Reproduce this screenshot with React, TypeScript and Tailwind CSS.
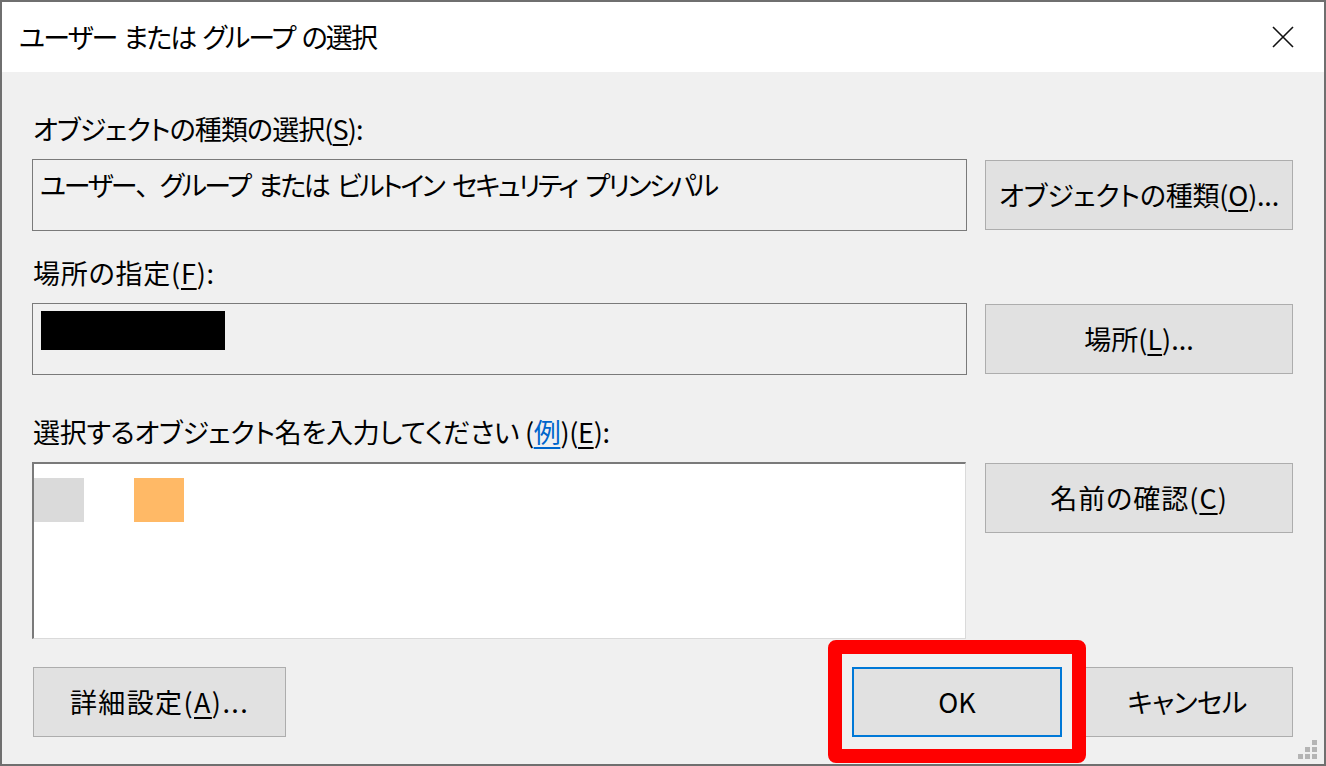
import React from 'react';

const font = "[font-family:'Noto_Sans_CJK_JP','Noto_Sans',sans-serif] [font-feature-settings:'palt']";

function Btn({
  children,
  className = '',
  focused = false,
}: {
  children: React.ReactNode;
  className?: string;
  focused?: boolean;
}) {
  const border = focused ? 'border-2 border-[#0078d7]' : 'border border-[#adadad]';
  return (
    <div
      className={`flex h-[70px] items-center justify-center bg-[#e1e1e1] ${border} text-[27px] leading-[36px] text-black ${className}`}
    >
      {children}
    </div>
  );
}

function Label({ children, className = '' }: { children: React.ReactNode; className?: string }) {
  return <div className={`h-[36px] pl-[1px] text-[27px] leading-[36px] text-black ${className}`}>{children}</div>;
}

export default function App() {
  return (
    <div className={`relative w-[1326px] h-[766px] border-2 border-[#6f6f6f] bg-[#f0f0f0] flex flex-col ${font}`}>
      {/* title bar */}
      <div className="h-[70px] bg-white flex items-center justify-between pl-[17px] pr-[30px]">
        <span className="text-[27px] leading-[36px] tracking-[-1.9px] [word-spacing:3px] text-black">
          ユーザー または グループ の選択
        </span>
        <svg width="22" height="22" viewBox="0 0 22 22">
          <path d="M1 1 L21 21 M21 1 L1 21" stroke="#111" strokeWidth="1.6" fill="none" />
        </svg>
      </div>

      <div className="flex flex-col pl-[30px] pr-[31px]">
        <Label className="mt-[39px] tracking-[-0.9px]">
          オブジェクトの種類の選択(<u className="underline-offset-4">S</u>):
        </Label>
        <div className="mt-[12px] flex items-start gap-[18px]">
          <div className="w-[935px] h-[72px] border border-[#7a7a7a] pl-[7px] pt-[7px] text-[27px] leading-[36px] tracking-[-2.45px] [word-spacing:5px] text-black">
            ユーザー<span className="[font-feature-settings:normal]">、</span>グループ または ビルトイン セキュリティ プリンシパル
          </div>
          <Btn className="w-[308px] mt-[1px] tracking-[-0.2px]">
            オブジェクトの種類(<u className="underline-offset-4">O</u>)...
          </Btn>
        </div>

        <Label className="mt-[24px] tracking-[0.8px]">
          場所の指定(<u className="underline-offset-4">F</u>):
        </Label>
        <div className="mt-[12px] flex items-start gap-[18px]">
          <div className="w-[935px] h-[72px] border border-[#7a7a7a] pl-[8px] pt-[7px]">
            <div className="w-[184px] h-[39px] bg-black" />
          </div>
          <Btn className="w-[308px] mt-[1px]">
            場所(<u className="underline-offset-4">L</u>)...
          </Btn>
        </div>

        <Label className="mt-[39px] tracking-[-0.3px]">
          選択するオブジェクト名を入力してください (<span className="text-[#0066cc] underline underline-offset-4">例</span>)(<u className="underline-offset-4">E</u>):
        </Label>
        <div className="mt-[12px] flex items-start gap-[19px]">
          <div className="w-[934px] h-[177px] bg-white border-t-2 border-l-2 border-r border-b border-t-[#7a7a7a] border-l-[#7a7a7a] border-r-[#dadada] border-b-[#dadada] pt-[14px] flex items-start gap-[50px]">
            <div className="w-[50px] h-[44px] bg-[#dadada]" />
            <div className="w-[50px] h-[44px] bg-[#ffb966]" />
          </div>
          <Btn className="w-[308px] mt-[1px] tracking-[1px]">
            名前の確認(<u className="underline-offset-4">C</u>)
          </Btn>
        </div>

        <div className="mt-[28px] flex items-start">
          <Btn className="w-[253px] ml-[1px] tracking-[1.4px]">
            詳細設定(<u className="underline-offset-4">A</u>)...
          </Btn>
          <div className="flex-1" />
          <Btn className="w-[210px]" focused>
            OK
          </Btn>
          <Btn className="w-[212px] ml-[19px] tracking-[-0.6px]">キャンセル</Btn>
        </div>
      </div>

      {/* red highlight */}
      <div className="absolute left-[826px] top-[638px] w-[258px] h-[123px] border-[14px] border-[#ff0000] rounded-[8px]" />

      {/* size grip */}
      <svg className="absolute left-[1294px] top-[736px]" width="24" height="24" viewBox="0 0 24 24">
        <g fill="#b4b4b4">
          <rect x="16" y="2" width="5" height="5" />
          <rect x="9" y="9" width="5" height="5" />
          <rect x="16" y="9" width="5" height="5" />
          <rect x="2" y="16" width="5" height="5" />
          <rect x="9" y="16" width="5" height="5" />
          <rect x="16" y="16" width="5" height="5" />
        </g>
      </svg>
    </div>
  );
}
